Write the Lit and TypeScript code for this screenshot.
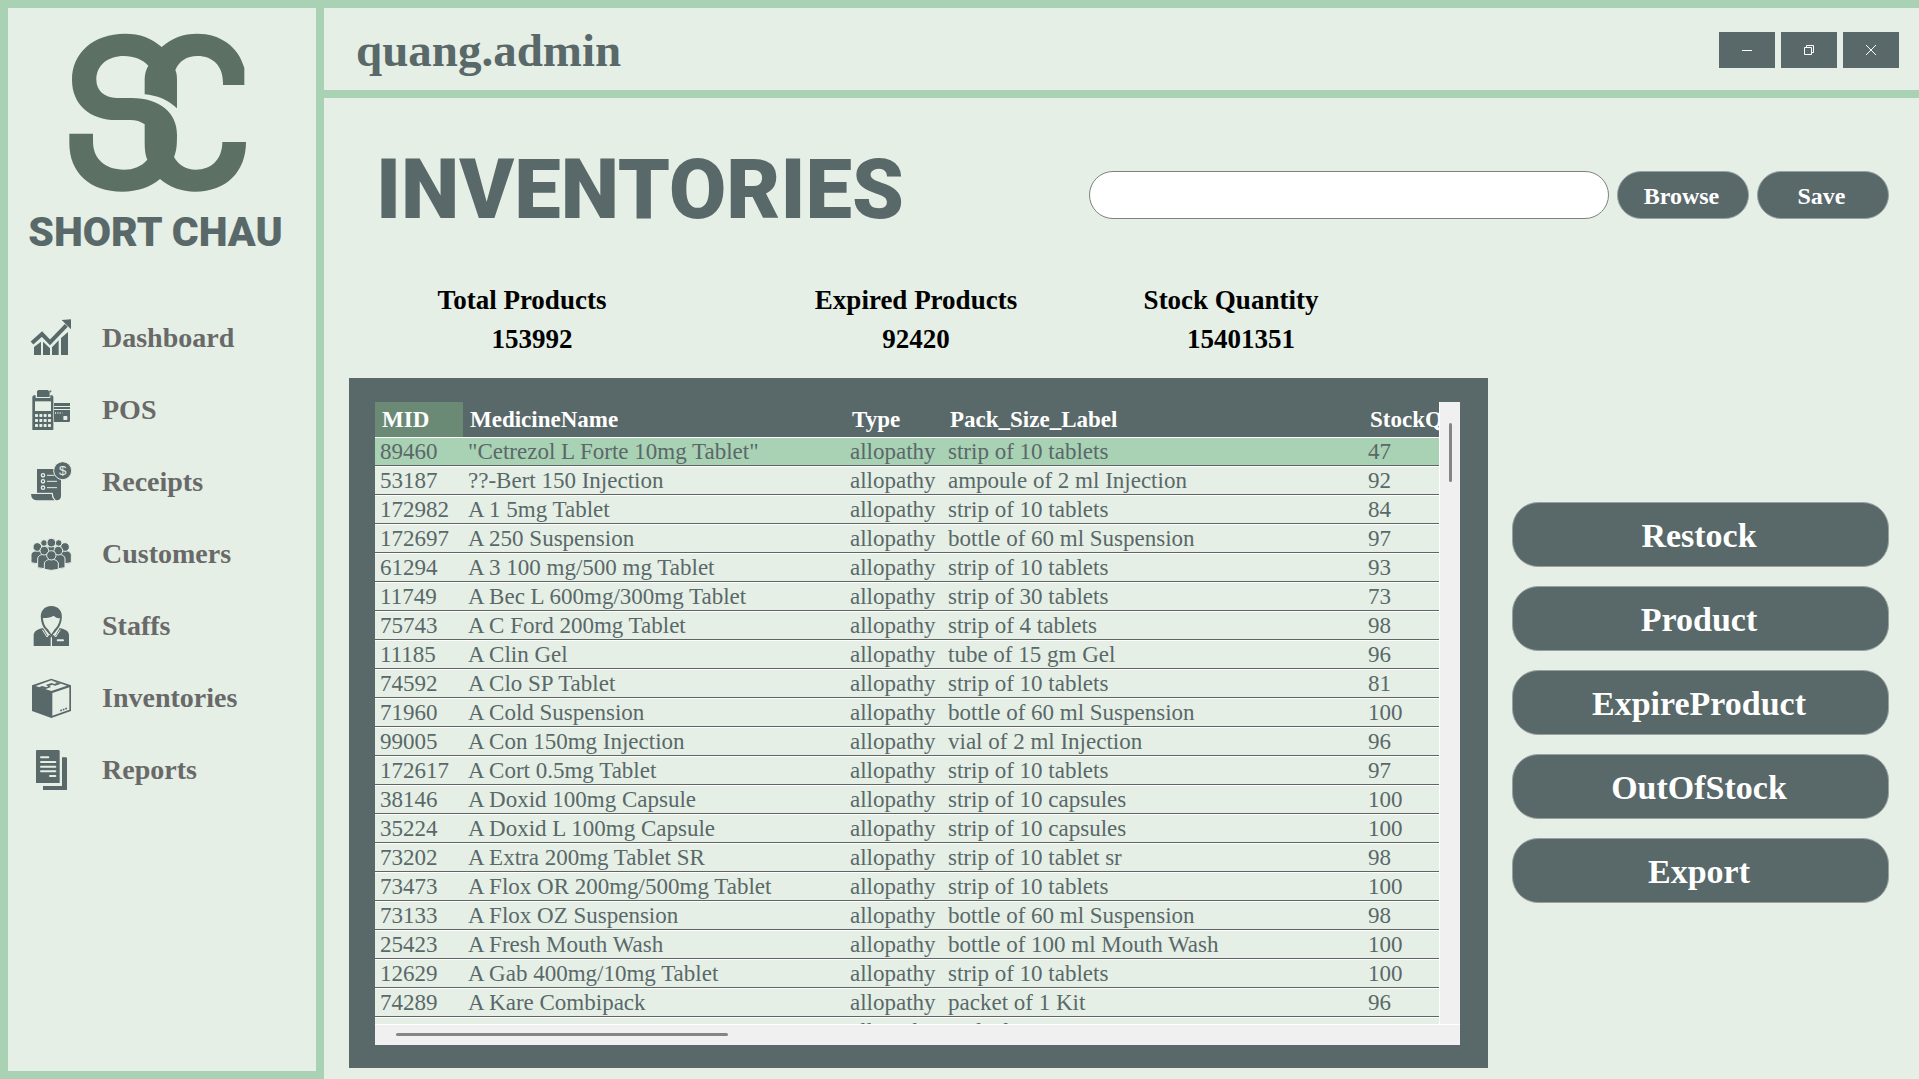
import { LitElement, html, svg, css, SVGTemplateResult } from "lit";
import { customElement, state } from "lit/decorators.js";
import { classMap } from "lit/directives/class-map.js";

interface NavItem {
  label: string;
  icon: SVGTemplateResult;
}

const person = (x: number, y: number, r: number, w: number, h: number) => svg`
  <path class="fig" d="M${x - w / 2} ${y + r + h} V${y + r + 12} C${x - w / 2} ${y + r + 2} ${x - w / 4} ${y + r - 2} ${x} ${y + r - 2} C${x + w / 4} ${y + r - 2} ${x + w / 2} ${y + r + 2} ${x + w / 2} ${y + r + 12} V${y + r + h} Q${x} ${y + r + h + 6} ${x - w / 2} ${y + r + h} Z"/>
  <circle class="fig" cx=${x} cy=${y} r=${r}/>`;

const keys = [12, 25, 38, 51].flatMap((x) => [72, 87, 102].map((y) => [x, y]));

const navItems: NavItem[] = [
  {
    label: "Dashboard",
    icon: svg`
      <path class="line" stroke-width="12" d="M3 75 L33 48 L57 73 L106 22"/>
      <path d="M92 6 L120 4 V34 Z"/>
      <path d="M9 111 V87 L30 71 V111 Z M36 111 V71 L57 91 V111 Z M63 111 V88 L83 67 V111 Z M90 111 V60 L111 42 V111 Z"/>`,
  },
  {
    label: "POS",
    icon: svg`
      <path d="M4 22 Q4 16 10 16 H14 V24 H58 V16 H63 Q67 16 67 22 V120 H4 Z"/>
      <path d="M18 4 L22 0 H50 L56 5 V21 H18 Z"/>
      <path class="thin" d="M54 4 H62 M58 0 V8"/>
      <rect class="cut" x="12" y="34" width="48" height="29"/>
      ${keys.map(([x, y]) => svg`<rect class="cut" x=${x} y=${y} width="9" height="9" rx="2"/>`)}
      <path d="M69 39 H117 V48 H69 Z M69 51 H117 V57 H69 Z M69 60 H117 V92 Q117 96 113 96 H69 Z"/>
      <path class="cutline" stroke-width="5" stroke-dasharray="3 4" d="M72 69 H94"/>
      <rect class="cut" x="97" y="78" width="12" height="12" rx="2"/>`,
  },
  {
    label: "Receipts",
    icon: svg`
      <path d="M18 21 H90 V102 Q89 115 77 115 Q66 114 65 93 H18 Z"/>
      <path d="M0 96 H62 Q63 108 71 115 H16 Q1 113 0 96 Z"/>
      <path class="cutline" stroke-width="3" d="M18 94 H64 Q64 108 72 114"/>
      <circle class="halo" cx="95" cy="26" r="27"/>
      <text class="cut coin" x="95" y="40" text-anchor="middle">$</text>
      <path class="cutline" stroke-width="3" d="M48 40 H70 M48 58 H78 M48 77 H78"/>
      <circle class="cutline" stroke-width="4" cx="36" cy="40" r="5"/>
      <circle class="cutline" stroke-width="4" cx="36" cy="58" r="5"/>
      <circle class="cutline" stroke-width="4" cx="36" cy="77" r="5"/>`,
  },
  {
    label: "Customers",
    icon: svg`
      ${person(39, 27, 10, 30, 30)}${person(83, 27, 10, 30, 30)}${person(61, 26, 13, 32, 32)}
      ${person(19, 39, 13, 38, 34)}${person(102, 39, 13, 38, 34)}
      ${person(40, 50, 13, 40, 38)}${person(82, 50, 13, 40, 38)}
      ${person(61, 64, 14, 42, 28)}`,
  },
  {
    label: "Staffs",
    icon: svg`
      <path d="M30 40 C26 16 40 0 61 0 C82 0 96 16 92 40 C90 58 80 70 76 74 L61 92 L46 74 C40 68 32 58 30 40 Z"/>
      <path class="cut" d="M36 36 C50 36 62 34 68 29 C72 34 80 37 87 37 C85 54 76 66 71 70 L61 85 L51 70 C44 64 37 54 36 36 Z"/>
      <path d="M8 120 V88 C9 74 20 70 36 66 L50 90 L55 84 L61 92 L67 84 L73 90 L86 66 C102 70 114 74 114 88 V120 Z"/>
      <path class="cutline" stroke-width="3" d="M34 71 L48 93 L56 84 M88 71 L74 93 L66 84"/>
      <path class="cutline" stroke-width="4" d="M61 94 V120"/>
      <path class="cutline" stroke-width="6" stroke-linecap="round" d="M80 103 H96"/>`,
  },
  {
    label: "Inventories",
    icon: svg`
      <path d="M61 2 L120 22 V99 L61 120 L3 99 V22 Z"/>
      <path class="cut" d="M64 45 L115 28 V95 L64 113 Z"/>
      <path class="cut" d="M61 7 L108 23 L61 39 L14 24 Z"/>
      <path d="M22 28 L34 24 L46 28 L52 25 L44 21 L62 15 L70 18 L78 15 L70 11 L62 8 L74 11 L90 17 L72 23 L64 20 L55 23 L60 27 L42 34 Z"/>
      <path class="line" stroke-width="5" stroke-dasharray="5 3" d="M88 98 L110 90"/>`,
  },
  {
    label: "Reports",
    icon: svg`
      <path d="M18 0 H82 Q86 0 86 4 V99 H15 V3 Q15 0 18 0 Z"/>
      <path d="M93 22 H105 Q108 22 108 26 V120 H36 V108 H93 Z"/>
      <path class="cutline" stroke-width="6" stroke-linecap="round" d="M30 22 H52 M30 36 H73 M30 50 H73 M30 64 H73 M57 78 H73"/>`,
  },
];

const stats = [
  { label: "Total Products", value: "153992", inset: true },
  { label: "Expired Products", value: "92420", inset: false },
  { label: "Stock Quantity", value: "15401351", inset: true },
];

const columns = ["MID", "MedicineName", "Type", "Pack_Size_Label", "StockQuantity"];

const medicines: [string, string, string, string][] = [
  ["89460", '"Cetrezol L Forte 10mg Tablet"', "strip of 10 tablets", "47"],
  ["53187", "??-Bert 150 Injection", "ampoule of 2 ml Injection", "92"],
  ["172982", "A 1 5mg Tablet", "strip of 10 tablets", "84"],
  ["172697", "A 250 Suspension", "bottle of 60 ml Suspension", "97"],
  ["61294", "A 3 100 mg/500 mg Tablet", "strip of 10 tablets", "93"],
  ["11749", "A Bec L 600mg/300mg Tablet", "strip of 30 tablets", "73"],
  ["75743", "A C Ford 200mg Tablet", "strip of 4 tablets", "98"],
  ["11185", "A Clin Gel", "tube of 15 gm Gel", "96"],
  ["74592", "A Clo SP Tablet", "strip of 10 tablets", "81"],
  ["71960", "A Cold Suspension", "bottle of 60 ml Suspension", "100"],
  ["99005", "A Con 150mg Injection", "vial of 2 ml Injection", "96"],
  ["172617", "A Cort 0.5mg Tablet", "strip of 10 tablets", "97"],
  ["38146", "A Doxid 100mg Capsule", "strip of 10 capsules", "100"],
  ["35224", "A Doxid L 100mg Capsule", "strip of 10 capsules", "100"],
  ["73202", "A Extra 200mg Tablet SR", "strip of 10 tablet sr", "98"],
  ["73473", "A Flox OR 200mg/500mg Tablet", "strip of 10 tablets", "100"],
  ["73133", "A Flox OZ Suspension", "bottle of 60 ml Suspension", "98"],
  ["25423", "A Fresh Mouth Wash", "bottle of 100 ml Mouth Wash", "100"],
  ["12629", "A Gab 400mg/10mg Tablet", "strip of 10 tablets", "100"],
  ["74289", "A Kare Combipack", "packet of 1 Kit", "96"],
  ["70122", "A Pimex 1000mg/125mg Injection", "vial of 1 Injection", "100"],
];

const actions = ["Restock", "Product", "ExpireProduct", "OutOfStock", "Export"];

@customElement("app-sidebar")
class AppSidebar extends LitElement {
  static styles = css`
    :host {
      display: block;
      box-sizing: border-box;
      border: 8px solid var(--mint);
      padding-top: 25px;
    }
    .brand {
      display: flex;
      flex-direction: column;
      align-items: center;
      gap: 15px;
      padding-right: 9px;
    }
    .logo {
      width: 178px;
      height: 160px;
      fill: #5c7064;
    }
    .name {
      padding-right: 4px;
      font: 900 41px/48px Roboto, "Liberation Sans", sans-serif;
      white-space: nowrap;
    }
    .nav {
      display: flex;
      flex-direction: column;
      margin-top: 46px;
      padding-left: 23px;
    }
    .link {
      display: flex;
      align-items: center;
      gap: 31px;
      height: 72px;
      color: #696969;
      font-size: 28px;
      font-weight: bold;
      text-decoration: none;
    }
    .icon {
      width: 40px;
      height: 40px;
      fill: var(--slate);
      overflow: visible;
    }
    .line {
      fill: none;
      stroke: var(--slate);
    }
    .thin {
      fill: none;
      stroke: var(--slate);
      stroke-width: 2px;
    }
    .cut {
      fill: var(--pale);
    }
    .cutline {
      fill: none;
      stroke: var(--pale);
    }
    .halo {
      stroke: var(--pale);
      stroke-width: 3px;
    }
    .fig {
      stroke: var(--pale);
      stroke-width: 3px;
    }
    .coin {
      font: 40px "Liberation Sans", sans-serif;
    }
  `;

  render() {
    return html`
      <div class="brand">
        <svg class="logo" viewBox="207 100 534 480" aria-hidden="true">
          <path d="M485 142 C455 115 420 102 375 102 C280 102 216 160 216 240 C216 315 270 361 350 361 L390 361 C408 361 422 365 434 374 L434 430 C434 450 436 468 442 480 C425 500 400 510 372 510 C315 510 279 478 279 425 L279 402 L208 402 L208 430 C208 520 270 576 367 576 C412 576 450 563 480 538 C510 563 545 576 585 576 C680 576 738 515 738 427 L667 427 C667 478 635 510 587 510 C558 510 535 496 522 472 C529 455 531 440 531 405 C531 340 480 295 395 295 L350 295 C312 293 289 272 289 240 C289 198 322 169 372 169 C402 169 428 180 445 198 C437 212 434 225 434 245 L434 284 C470 287 503 300 531 326 L531 240 C531 228 530 220 526 211 C538 184 560 169 592 169 C640 169 669 200 669 250 L669 256 L733 256 L733 205 C715 140 660 102 592 102 C550 102 515 115 485 142 Z"/>
        </svg>
        <div class="name">SHORT CHAU</div>
      </div>
      <nav class="nav">
        ${navItems.map(
          (item) => html`<a class="link" href="#${item.label.toLowerCase()}">
            <svg class="icon" viewBox="0 0 120 120" aria-hidden="true">${item.icon}</svg>
            <span>${item.label}</span>
          </a>`
        )}
      </nav>
    `;
  }
}

@customElement("medicine-table")
class MedicineTable extends LitElement {
  static styles = css`
    :host {
      display: grid;
      grid-template-columns: minmax(0, 1fr) 21px;
      grid-template-rows: minmax(0, 1fr) 21px;
      box-sizing: border-box;
      min-height: 0;
      padding: 24px 28px 23px 26px;
      background: var(--slate);
    }
    .viewport {
      overflow: hidden;
      background: var(--pale);
    }
    .table {
      width: 1200px;
      table-layout: fixed;
      border-collapse: separate;
      border-spacing: 0;
      font-size: 23px;
      line-height: 27px;
      white-space: nowrap;
    }
    .mid { width: 88px; }
    .title { width: 382px; }
    .type { width: 98px; }
    .pack { width: 420px; }
    .head {
      height: 35px;
      padding: 0 0 0 7px;
      background: var(--slate);
      color: #fff;
      text-align: left;
    }
    .sorted {
      background: #6b8a76;
    }
    .cell {
      height: 27px;
      padding: 0 0 0 5px;
      border-top: 1px solid #fff;
      border-bottom: 1px solid #5f6464;
    }
    .row {
      cursor: default;
    }
    .selected {
      background: var(--mint);
    }
    .track {
      display: flex;
      background: #f0f0f0;
    }
    .vertical {
      justify-content: center;
      padding-top: 21px;
      border-left: 1px solid #fff;
    }
    .horizontal {
      align-items: center;
      grid-column: 1 / 3;
      padding-left: 21px;
      padding-bottom: 2px;
      border-top: 1px solid #fff;
    }
    .thumb {
      border-radius: 2px;
      background: #858585;
    }
    .vertical .thumb {
      width: 3px;
      height: 59px;
    }
    .horizontal .thumb {
      width: 332px;
      height: 3px;
    }
  `;

  @state() private selected = 0;

  render() {
    return html`
      <div class="viewport">
        <table class="table">
          <colgroup>
            <col class="mid" /><col class="title" /><col class="type" /><col class="pack" /><col />
          </colgroup>
          <thead>
            <tr>
              ${columns.map(
                (name, i) => html`<th scope="col" class=${classMap({ head: true, sorted: i === 0 })}>${name}</th>`
              )}
            </tr>
          </thead>
          <tbody>
            ${medicines.map(
              ([id, name, pack, stock], i) => html`<tr
                class=${classMap({ row: true, selected: i === this.selected })}
                @click=${() => (this.selected = i)}
              >
                <td class="cell">${id}</td>
                <td class="cell">${name}</td>
                <td class="cell">allopathy</td>
                <td class="cell">${pack}</td>
                <td class="cell">${stock}</td>
              </tr>`
            )}
          </tbody>
        </table>
      </div>
      <div class="track vertical"><div class="thumb"></div></div>
      <div class="track horizontal"><div class="thumb"></div></div>
    `;
  }
}

@customElement("app-root")
class AppRoot extends LitElement {
  static styles = css`
    :host {
      --mint: #a9d1b4;
      --pale: #e5efe5;
      --slate: #596869;
      display: grid;
      grid-template-columns: 324px minmax(0, 1fr);
      height: 100vh;
      overflow: hidden;
      background: var(--pale);
      color: var(--slate);
      font-family: "Liberation Serif", "Times New Roman", serif;
    }
    .page {
      display: flex;
      flex-direction: column;
      min-width: 0;
      min-height: 0;
    }
    .topbar {
      display: flex;
      align-items: center;
      justify-content: space-between;
      box-sizing: border-box;
      height: 98px;
      padding: 2px 20px 0 32px;
      border-top: 8px solid var(--mint);
      border-bottom: 8px solid var(--mint);
    }
    .user {
      font-size: 47px;
      font-weight: bold;
      line-height: 48px;
    }
    .window {
      display: flex;
      gap: 6px;
    }
    .winbtn {
      display: flex;
      align-items: center;
      justify-content: center;
      width: 56px;
      height: 36px;
      padding: 0;
      border: 0;
      background: var(--slate);
    }
    .glyph {
      width: 12px;
      height: 12px;
      fill: none;
      stroke: #fff;
      stroke-width: 1px;
    }
    .main {
      display: flex;
      flex: 1;
      flex-direction: column;
      min-height: 0;
      padding: 44px 30px 11px 25px;
    }
    .heading {
      display: flex;
      align-items: flex-start;
      justify-content: space-between;
      padding-left: 27px;
    }
    .title {
      margin: 0;
      font: 900 83px/96px Roboto, "Liberation Sans", sans-serif;
    }
    .search {
      display: flex;
      gap: 8px;
      padding-top: 29px;
    }
    .field {
      box-sizing: border-box;
      width: 520px;
      height: 48px;
      padding: 0 24px;
      border: 1px solid #808080;
      border-radius: 24px;
      background: #fff;
      font: 23px "Liberation Serif", serif;
    }
    .btn {
      border: 1px solid #97a1a1;
      background: var(--slate);
      color: #fff;
      font-family: inherit;
      font-weight: bold;
      padding: 2px 3px 0 0;
    }
    .small {
      width: 132px;
      height: 48px;
      border-radius: 24px;
      font-size: 24px;
    }
    .stats {
      display: grid;
      grid-template-columns: 346fr 442fr 188fr 163fr;
      margin: 43px 401px 19px 0;
      color: #000;
      font-size: 27px;
      font-weight: bold;
      line-height: 39px;
      text-align: center;
      white-space: nowrap;
    }
    .value {
      margin: 0;
    }
    .inset {
      padding-left: 20px;
    }
    .body {
      display: grid;
      grid-template-columns: minmax(0, 1fr) 377px;
      grid-template-rows: minmax(0, 1fr);
      flex: 1;
      gap: 24px;
      min-height: 0;
    }
    .actions {
      display: flex;
      flex-direction: column;
      gap: 19px;
      padding-top: 124px;
    }
    .large {
      height: 65px;
      border-radius: 26px;
      font-size: 34px;
    }
  `;

  render() {
    return html`
      <app-sidebar></app-sidebar>
      <div class="page">
        <header class="topbar">
          <div class="user">quang.admin</div>
          <div class="window">
            <button class="winbtn" type="button" aria-label="Minimize">
              <svg class="glyph" viewBox="0 0 12 12"><path d="M1 6.5 H11" /></svg>
            </button>
            <button class="winbtn" type="button" aria-label="Restore">
              <svg class="glyph" viewBox="0 0 12 12"><path d="M1.5 3.5 H8.5 V10.5 H1.5 Z M3.5 3.5 V1.5 H10.5 V8.5 H8.5" /></svg>
            </button>
            <button class="winbtn" type="button" aria-label="Close">
              <svg class="glyph" viewBox="0 0 12 12"><path d="M1 1 L11 11 M11 1 L1 11" /></svg>
            </button>
          </div>
        </header>
        <main class="main">
          <div class="heading">
            <h1 class="title">INVENTORIES</h1>
            <form class="search" @submit=${(e: Event) => e.preventDefault()}>
              <input class="field" type="text" aria-label="File" />
              <button class="btn small" type="button">Browse</button>
              <button class="btn small" type="submit">Save</button>
            </form>
          </div>
          <dl class="stats">
            ${stats.map(
              (s) => html`<div>
                <dt>${s.label}</dt>
                <dd class=${classMap({ value: true, inset: s.inset })}>${s.value}</dd>
              </div>`
            )}
          </dl>
          <div class="body">
            <medicine-table></medicine-table>
            <div class="actions">
              ${actions.map((a) => html`<button class="btn large" type="button">${a}</button>`)}
            </div>
          </div>
        </main>
      </div>
    `;
  }
}
